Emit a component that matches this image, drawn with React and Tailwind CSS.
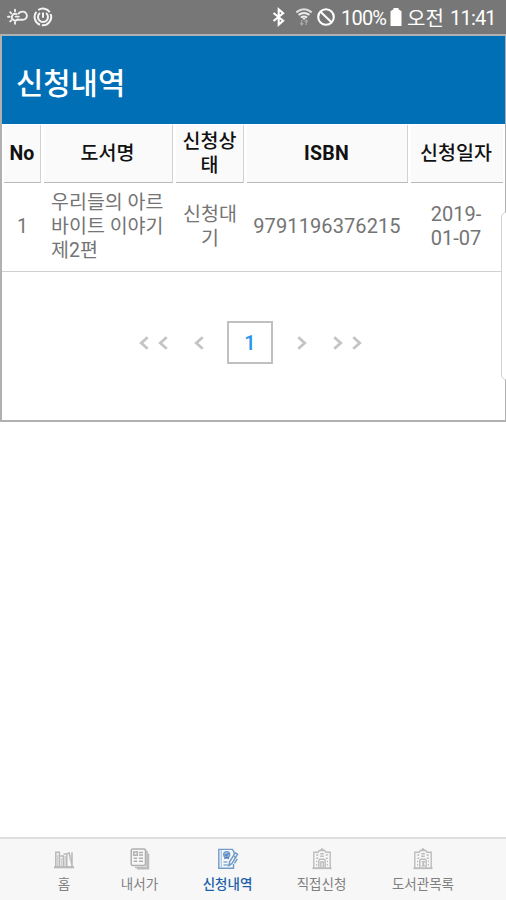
import React from "react";

const CloudSun = () => (
  <svg width="22" height="20" viewBox="0 0 22 20" fill="none" stroke="#f0f0f0" strokeWidth="1.9" strokeLinecap="round">
    <path d="M9.5 7.2a3.3 3.3 0 1 0 1 5.3" />
    <path d="M8 2.8v1.6M8 15.2v1.6M1 9.8h1.6M3.2 5.2l1.1 1.1M3.2 14.4l1.1-1.1" />
    <path d="M8.6 9.6h3.2M11.4 6.6c1-1.3 2.4-2 4.4-2a4.1 4.1 0 1 1 0 8.2h-5.4" />
  </svg>
);

const Timer = () => (
  <svg width="20" height="20" viewBox="0 0 20 20" fill="none" stroke="#f4f4f4" strokeWidth="2">
    <path d="M3.4 4.8A8.3 8.3 0 0 0 7 17.7M8.8 18.2A8.3 8.3 0 0 0 17.6 7M16.8 5.2A8.3 8.3 0 0 0 5.2 3" />
    <path d="M7 6a5 5 0 1 0 6 0M10 5.4v5.4" />
  </svg>
);

const Bluetooth = () => (
  <svg width="14" height="20" viewBox="0 0 14 20" fill="none" stroke="#fff" strokeWidth="2.1">
    <path d="M1.5 6l9.6 7.8-4.4 3.8V2.4l4.4 3.8L1.5 14" />
  </svg>
);

const Wifi = () => (
  <svg width="18" height="20" viewBox="0 0 18 20" fill="none">
    <path d="M1.3 5.4Q9 -.8 16.7 5.4" stroke="#dedede" strokeWidth="2" />
    <path d="M3.6 7.9Q9 4 14.4 7.9M5.9 10.5Q9 8.3 12.1 10.5" stroke="#eee" strokeWidth="2" />
    <path d="M7.3 11h3.4L9 13.2z" fill="#eee" />
    <path d="M6.7 13v5M5.2 16.2l1.5 1.8 1.5-1.8M11.3 18v-5M9.8 14.8l1.5-1.8 1.5 1.8" stroke="#a8a8a8" strokeWidth="1.3" />
  </svg>
);

const Block = () => (
  <svg width="18" height="18" viewBox="0 0 18 18" fill="none" stroke="#fff" strokeWidth="2.1">
    <circle cx="9" cy="9" r="7.8" />
    <path d="M3.5 3.8l11 10.4" />
  </svg>
);

const Battery = () => (
  <svg width="12" height="18" viewBox="0 0 12 18" fill="#fff">
    <path d="M3.5 0h5v1.2l3 2V18H.5V3.2l3-2z" />
  </svg>
);

const Shelf = () => (
  <svg width="22" height="22" viewBox="0 0 22 22" fill="none" stroke="#b8b8b8" strokeWidth="1.5">
    <path d="M1 19.2h20" strokeWidth="2.2" />
    <path d="M2.8 19V4.3h3.6V19M6.6 8h3.8v11M10.4 6h3.4v13M14 5.6l2.2-.6 3 13M19 18V4.2" />
    <path d="M4.6 7v11M8.5 10v8M12.1 8v10M17.2 9v3" stroke="#cfcfcf" />
  </svg>
);

const Papers = () => (
  <svg width="20" height="22" viewBox="0 0 20 22" fill="none" stroke="#b0b0b0" strokeWidth="1.5">
    <path d="M16 3.5h1v16H5M18.5 5.5v15.3H7" stroke="#bcbcbc" />
    <rect x="1.2" y="1" width="14.3" height="16.5" rx="1.5" />
    <rect x="3.7" y="4" width="3.6" height="3.2" />
    <path d="M9 4.5h4M9 7h4M3.7 10.3h3.5M9 10.3h4M3.7 13.2h3.5M9 13.2h4" />
  </svg>
);

const Request = () => (
  <svg width="22" height="22" viewBox="0 0 22 22" fill="none" stroke="#6f9bcb" strokeWidth="1.4">
    <path d="M16.5 16v4.2H1.8V1.4h13.4l1.6 2v2" />
    <path d="M4.3 2v18" stroke="#b4cbe4" />
    <circle cx="9.7" cy="6.6" r="3" fill="#a9c3e1" />
    <path d="M8 6.2l1.4 1.5 2.2-2.4M7.3 10.5l2.4-1 2.4 1" stroke="#4d80bb" />
    <path d="M6.5 14h4M6.5 17h7" stroke="#8baed4" />
    <path d="M18.3 4.8l2.3 1.4-5.6 9.2-3 2 .6-3.6z" />
    <path d="M17 8.3l1.6 1M20.3 10.8l-2.8 4.6" />
  </svg>
);

const Building = ({ mark }) => (
  <svg width="20" height="22" viewBox="0 0 20 22" fill="none" stroke="#bcbcbc" strokeWidth="1.4">
    <path d="M.5 20.2h19" strokeWidth="1.9" />
    <path d="M1.8 20V4.3h4.4l1-1.8h5.6l1 1.8h4.4V20M10 2.5V0M8.4 1.6h3.2" />
    <path d="M4.2 7h2.2M13.6 7h2.2M4.2 10.2h2M13.8 10.2h2M4 13.5h1.2M14.8 13.5H16M4 16.8h1.2M14.8 16.8H16" />
    <path d="M8.2 5.7h3.6M8.2 8.2h3.6M6.8 20v-7.8l1-1h4.4l1 1V20" />
    {mark ? <path d="M8.7 13.8h2.6l-1.4 2 1.4 2H8.7" /> : <path d="M8.8 20v-6h2.5v6" />}
  </svg>
);

const Arrow = ({ right }) => (
  <svg width="10" height="14" viewBox="0 0 10 14" fill="none" stroke="#c4c4c4" strokeWidth="2.8">
    <path d={right ? "M1.3 1.2L7.7 7l-6.4 5.8" : "M8.7 1.2L2.3 7l6.4 5.8"} />
  </svg>
);

const tabs = [
  { label: "홈", icon: <Shelf />, width: "w-[60px]" },
  { label: "내서가", icon: <Papers />, width: "w-[91px]" },
  { label: "신청내역", icon: <Request />, width: "w-[85px]", active: true },
  { label: "직접신청", icon: <Building />, width: "w-[103px]" },
  { label: "도서관목록", icon: <Building mark />, width: "w-[100px]" },
];

const th = "flex h-[58px] items-center justify-center border-b border-[#b9b9b9] bg-[#fafafa] text-center";
const edge = " border-r border-r-[#d2d2d2]";
const kr = "font-['Noto_Sans_CJK_KR',sans-serif]";

export default function App() {
  return (
    <div className="relative flex h-[900px] w-[506px] flex-col overflow-hidden bg-white font-[Roboto,'Noto_Sans_CJK_KR',sans-serif]">
      <header className="flex h-[34px] shrink-0 items-center bg-[#777] pl-[7px] text-white">
        <CloudSun />
        <div className="ml-[4px]"><Timer /></div>
        <div className="ml-[219px]"><Bluetooth /></div>
        <div className="ml-[9px]"><Wifi /></div>
        <div className="ml-[4px]"><Block /></div>
        <span className="mt-[2px] ml-[6px] w-[46px] text-[20px] leading-[24px] tracking-[-0.8px] whitespace-nowrap">100%</span>
        <div className="ml-[3px]"><Battery /></div>
        <span className={"mt-[1px] ml-[5px] w-[37px] text-[20px] leading-[24px] whitespace-nowrap " + kr}>오전</span>
        <span className="mt-[2px] ml-[6px] text-[20px] leading-[24px] tracking-[-0.8px] whitespace-nowrap">11:41</span>
      </header>

      <main className="flex h-[388px] shrink-0 flex-col border-2 border-r border-[#b0b0b0]">
        <div className="flex h-[88px] shrink-0 items-center bg-[#006fb6] pl-[14px] text-white">
          <h1 className={"mt-[4px] text-[29.7px] leading-[36px] font-medium " + kr}>신청내역</h1>
        </div>

        <div className="mt-px grid grid-cols-[37px_129px_68px_161px_92px] gap-x-[3px] pl-[2px] text-[19.5px] leading-[24px] font-bold text-[#111]">
          <div className={th + edge}>No</div>
          <div className={th + edge + " pr-[1px] font-medium"}>도서명</div>
          <div className={th + edge + " font-medium"}>신청상<br />태</div>
          <div className={th + edge + " pr-[1px] tracking-[0.3px]"}>ISBN</div>
          <div className={th + " pr-[2px] font-medium"}>신청일자</div>
        </div>

        <div className="grid h-[89px] shrink-0 grid-cols-[37px_129px_68px_161px_92px] items-center gap-x-[3px] border-b border-[#d0d0d0] pl-[2px] text-center text-[19.5px] leading-[24px] font-normal text-[#747474]">
          <div>1</div>
          <div className="pl-[7px] text-left whitespace-nowrap">우리들의 아르<br />바이트 이야기<br />제2편</div>
          <div>신청대<br />기</div>
          <div className="pr-[1px] pb-[2px] text-[20px] tracking-[0.1px]">9791196376215</div>
          <div className="pr-[2px] pb-[2px] text-[20px]">2019-<br />01-07</div>
        </div>

        <nav className="mt-[49px] flex h-[43px] items-center pl-[137px]">
          <div className="flex gap-[9px]"><Arrow /><Arrow /></div>
          <div className="ml-[26px]"><Arrow /></div>
          <div className="ml-[23px] flex h-[43px] w-[46px] items-center justify-center border-2 border-[#c0c0c0] text-[20px] font-medium text-[#2496ed]">1</div>
          <div className="ml-[24px]"><Arrow right /></div>
          <div className="ml-[26px] flex gap-[9px]"><Arrow right /><Arrow right /></div>
        </nav>
      </main>

      <div className="absolute top-[212px] right-[-5px] h-[168px] w-[10px] rounded-[5px] border border-[#d2d2d2] bg-white" />

      <footer className="mt-auto flex h-[63px] border-t-2 border-[#dedede] bg-[#f7f7f7] pl-[34px]">
        {tabs.map((tab) => (
          <div key={tab.label} className={"flex shrink-0 flex-col items-center pt-[9px] " + tab.width}>
            {tab.icon}
            <span className={"mt-[5px] text-[13.5px] leading-[16px] whitespace-nowrap " + kr + (tab.active ? " font-medium text-[#1d5fa9]" : " font-normal text-[#808080]")}>
              {tab.label}
            </span>
          </div>
        ))}
      </footer>
    </div>
  );
}
